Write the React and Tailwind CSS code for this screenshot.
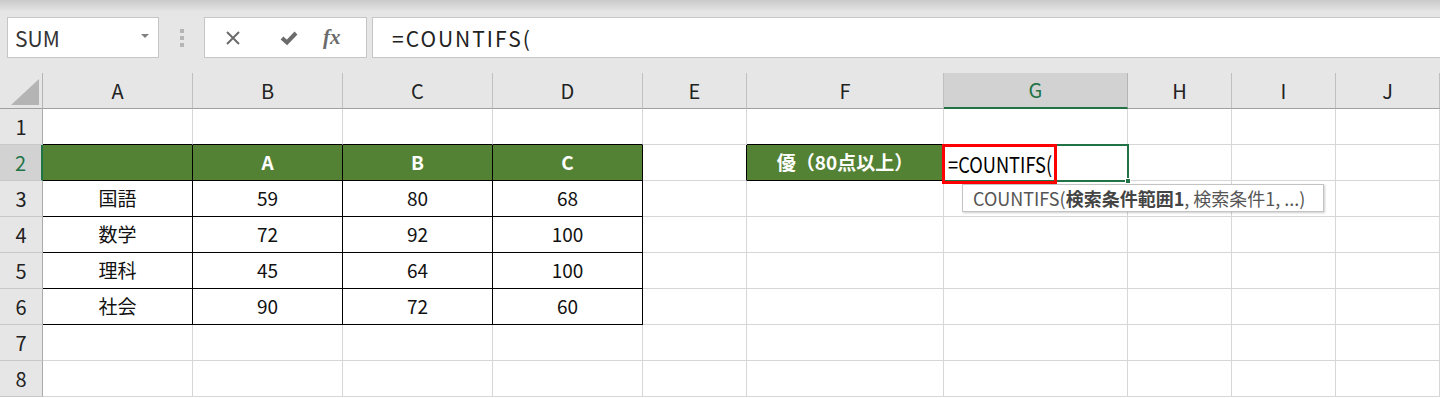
import React from 'react';

const font = { fontFamily: '"Noto Sans CJK JP", "Noto Sans", sans-serif' };

const cols = ['A', 'B', 'C', 'D', 'E', 'F', 'G', 'H', 'I', 'J'];

// per-row cell definitions: [text, classes]
const G = 'bg-[#548235] text-white font-bold';
const rows = [
  {
    n: 1,
    cells: [
      ['', 'border-b-black'],
      ['', 'border-b-black'],
      ['', 'border-b-black'],
      ['', 'border-b-black'],
      ['', ''],
      ['', 'border-b-black'],
      ['', ''],
      ['', ''],
      ['', ''],
      ['', ''],
    ],
  },
  {
    n: 2,
    cells: [
      ['', `${G} border-r-black border-b-black`],
      ['A', `${G} border-r-black border-b-black`],
      ['B', `${G} border-r-black border-b-black`],
      ['C', `${G} border-r-black border-b-black`],
      ['', 'border-r-black'],
      ['優（80点以上）', `${G} border-r-black border-b-black`],
      ['', ''],
      ['', ''],
      ['', ''],
      ['', ''],
    ],
  },
  ...[
    [3, '国語', 59, 80, 68],
    [4, '数学', 72, 92, 100],
    [5, '理科', 45, 64, 100],
    [6, '社会', 90, 72, 60],
  ].map(([n, s, a, b, c]) => ({
    n,
    cells: [
      [s, 'border-r-black border-b-black'],
      [a, 'border-r-black border-b-black'],
      [b, 'border-r-black border-b-black'],
      [c, 'border-r-black border-b-black'],
      ['', ''],
      ['', ''],
      ['', ''],
      ['', ''],
      ['', ''],
      ['', ''],
    ],
  })),
  { n: 7, cells: cols.map(() => ['', '']) },
  { n: 8, cells: cols.map(() => ['', '']) },
];

function Cell({ text, cls }) {
  const r = cls.includes('border-r-black') ? '' : 'border-r-[#d6d6d6]';
  const b = cls.includes('border-b-black') ? '' : 'border-b-[#d6d6d6]';
  return (
    <div className={`h-9 flex items-center justify-center border-r border-b text-[19px] text-[#111] ${r} ${b} ${cls}`}>
      {text}
    </div>
  );
}

function TopBar() {
  return (
    <div className="h-[73px] bg-[#e6e6e6] flex flex-col">
      <div className="h-3 bg-linear-to-b from-[#cacaca] to-[#e6e6e6]" />
      <div className="flex mt-[5px] h-[41px]">
        <div className="ml-[7px] w-[152px] bg-white border border-[#c6c6c6] flex items-center justify-between pl-[7px] pr-[9px]">
          <span className="text-[21px] text-[#333] pt-[3px]">SUM</span>
          <span className="w-0 h-0 border-l-[4px] border-r-[4px] border-t-[4px] border-l-transparent border-r-transparent border-t-[#808080] mb-[4px]" />
        </div>
        <div className="w-[45px] flex flex-col items-center justify-center gap-[3px]">
          <span className="w-[4px] h-[4px] bg-[#b5b5b5]" />
          <span className="w-[4px] h-[4px] bg-[#b5b5b5]" />
          <span className="w-[4px] h-[4px] bg-[#b5b5b5]" />
        </div>
        <div className="w-[163px] bg-white border border-[#c6c6c6] flex items-center">
          <svg className="ml-[20px]" width="16" height="16" viewBox="0 0 16 16">
            <path d="M2 2L14 14M14 2L2 14" stroke="#6b6b6b" strokeWidth="2" />
          </svg>
          <svg className="ml-[38px]" width="20" height="16" viewBox="0 0 20 16">
            <path d="M3 8L8 12.5L17 3" stroke="#6b6b6b" strokeWidth="4" fill="none" strokeLinejoin="miter" />
          </svg>
          <span
            className="ml-[24px] text-[21px] italic text-[#6b6b6b] font-bold"
            style={{ fontFamily: '"Liberation Serif", serif' }}
          >
            fx
          </span>
        </div>
        <div className="ml-[5px] flex-1 bg-white border border-r-0 border-[#c6c6c6] flex items-center pl-[19px]">
          <span className="text-[21px] tracking-[2px] text-[#222] pt-[2px]">=COUNTIFS(</span>
        </div>
      </div>
    </div>
  );
}

export default function App() {
  return (
    <div className="w-[1440px] h-[398px] overflow-hidden bg-white" style={font}>
      <TopBar />
      <div className="relative grid grid-cols-[43px_150px_150px_150px_150px_104px_197px_184px_104px_104px_104px]">
        {/* corner */}
        <div className="h-9 bg-[#e6e6e6] border-r border-b border-r-[#b5b5b5] border-b-[#a0a0a0] flex items-end justify-end pr-[3px] pb-[3px]">
          <svg width="28" height="26" viewBox="0 0 28 26">
            <path d="M28 0V26H0Z" fill="#b4b4b4" />
          </svg>
        </div>
        {cols.map((c) =>
          c === 'G' ? (
            <div
              key={c}
              className="h-9 bg-[#d2d2d2] border-r border-r-[#b5b5b5] border-b-2 border-b-[#217346] flex items-center justify-center text-[20px] text-[#217346]"
            >
              {c}
            </div>
          ) : (
            <div
              key={c}
              className="h-9 bg-[#e6e6e6] border-r border-b border-r-[#c0c0c0] border-b-[#a0a0a0] flex items-center justify-center text-[20px] text-[#222]"
            >
              {c}
            </div>
          )
        )}
        {rows.map((row) => (
          <React.Fragment key={row.n}>
            {row.n === 2 ? (
              <div className="h-9 bg-[#d2d2d2] border-r-2 border-b border-r-[#217346] border-b-[#c8c8c8] flex items-center justify-center text-[20px] text-[#217346]">
                {row.n}
              </div>
            ) : (
              <div className="h-9 bg-[#e6e6e6] border-r border-b border-r-[#ababab] border-b-[#c8c8c8] flex items-center justify-center text-[20px] text-[#222]">
                {row.n}
              </div>
            )}
            {row.cells.map(([t, cls], i) => (
              <Cell key={i} text={t} cls={cls} />
            ))}
          </React.Fragment>
        ))}

        {/* active cell G2 selection */}
        <div className="absolute left-[943px] top-[71px] w-[186px] h-[38px] border-2 border-[#217346]" />
        <div className="absolute left-[1125px] top-[105px] w-[6px] h-[6px] bg-[#217346] border border-white" />
        {/* typed text */}
        <div className="absolute left-[948px] top-[72px] h-9 flex items-center text-[22px] text-black origin-left scale-x-[0.83]">
          =COUNTIFS(
        </div>
        {/* red highlight */}
        <div className="absolute left-[942px] top-[71px] w-[115px] h-[40px] border-[3px] border-[#ff0000]" />
        {/* tooltip */}
        <div className="absolute left-[962px] top-[111px] w-[362px] h-[28px] bg-white border border-[#c3c3c3] shadow-[1px_1px_2px_rgba(0,0,0,0.2)] flex items-center pl-[10px] text-[18px] text-[#555] whitespace-nowrap">
          COUNTIFS(<b className="text-[#444]">検索条件範囲1</b>, 検索条件1, ...)
        </div>
      </div>
    </div>
  );
}
